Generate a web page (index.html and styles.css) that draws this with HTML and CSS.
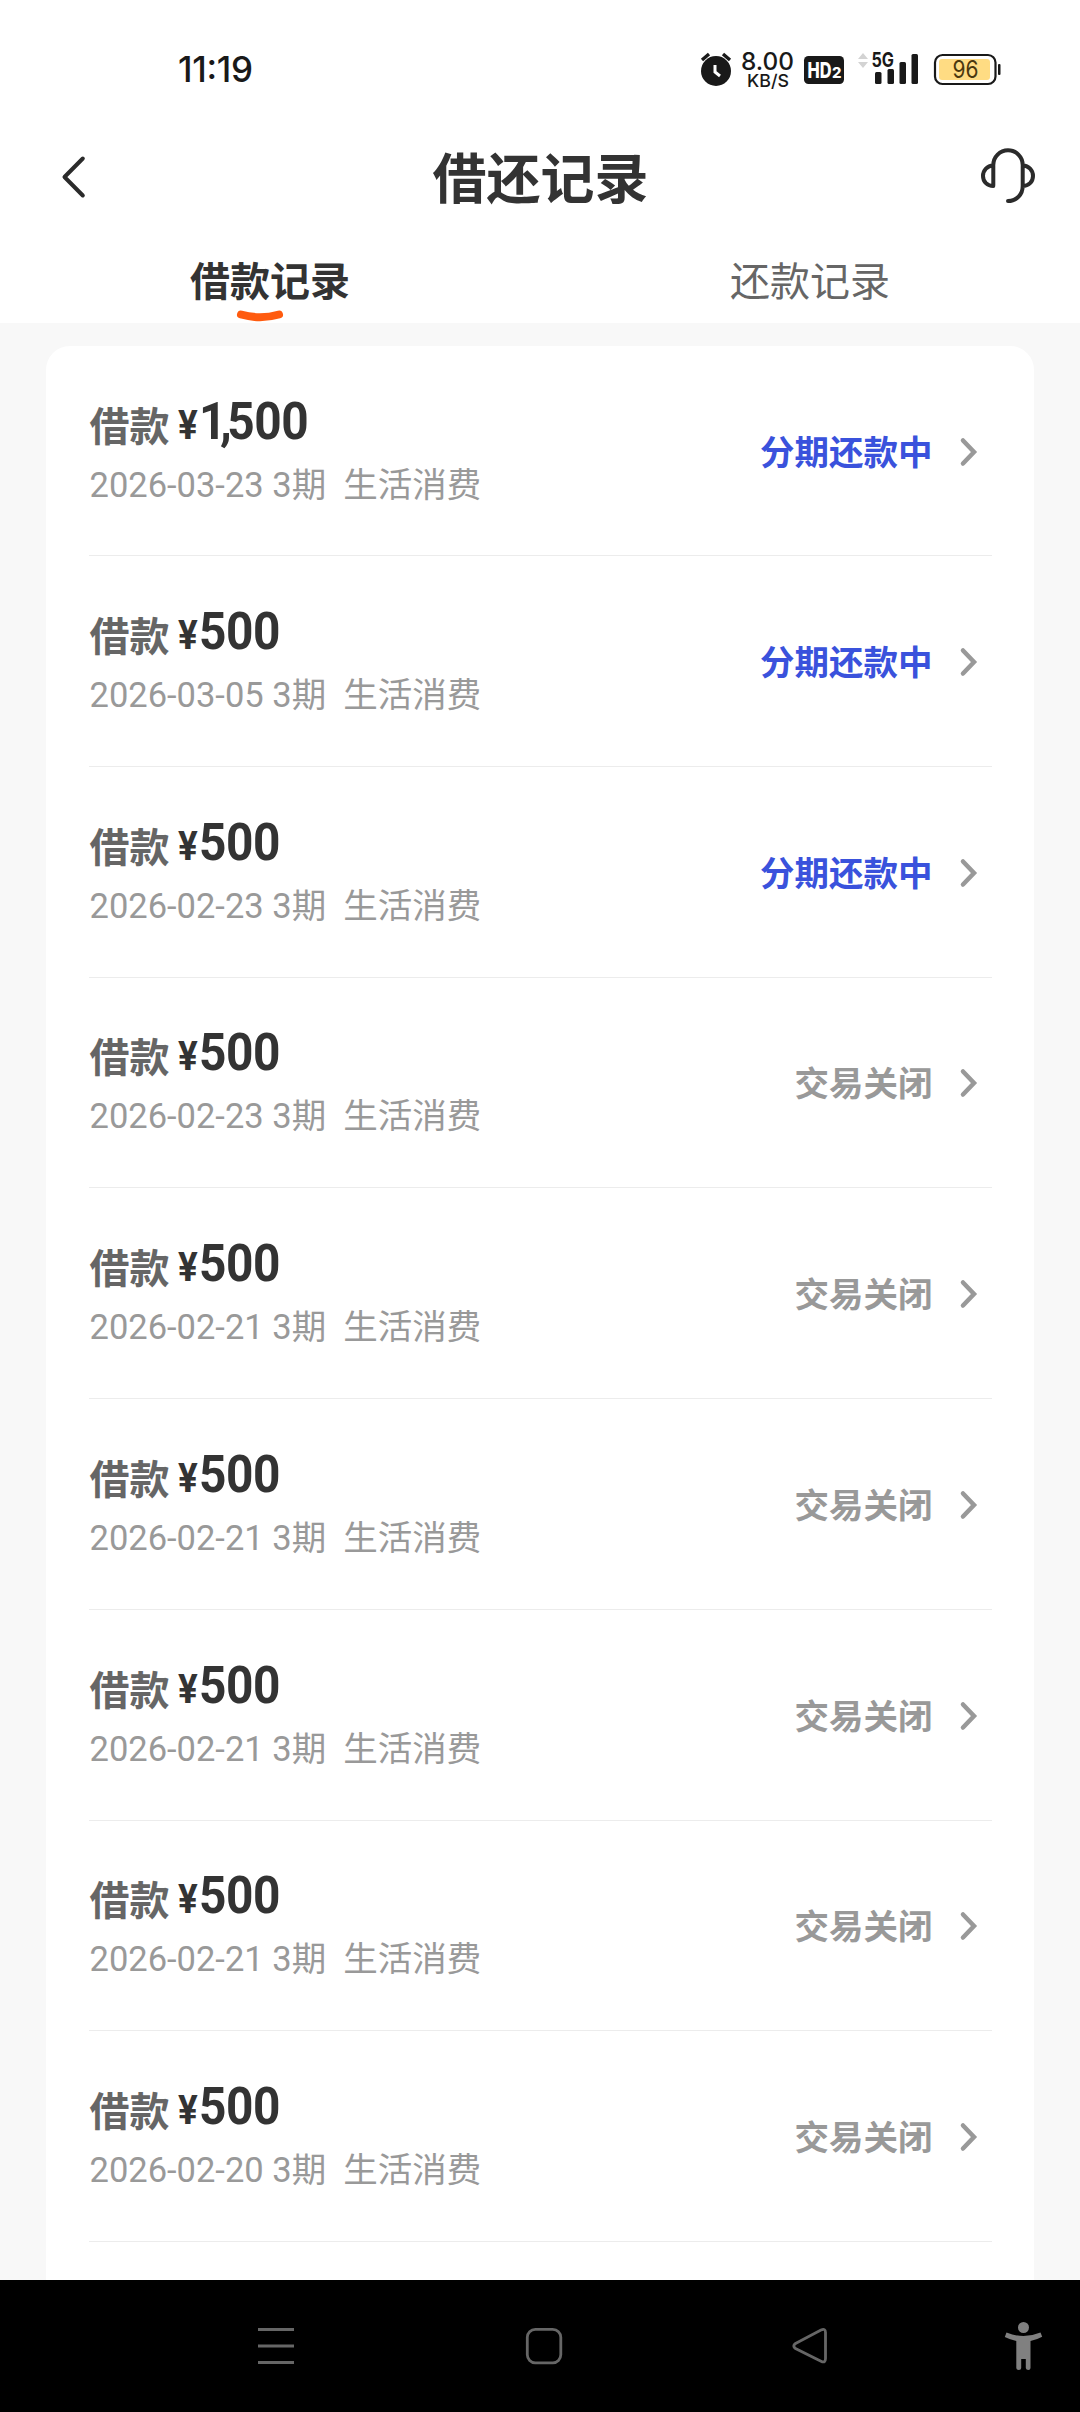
FILE: index.html
```html
<!DOCTYPE html>
<html lang="zh-CN">
<head>
<meta charset="utf-8">
<title>借还记录</title>
<link rel="stylesheet" href="styles.css">
</head>
<body>
<div class="screen">
  <header class="statusbar">
    <svg class="clock" viewBox="170 0 90 110"><text x="178" y="82" textLength="75" class="time">11:19</text></svg>
    <div class="indicators">
      <svg width="40" height="110" viewBox="697 0 40 110">
        <circle cx="716" cy="71" r="15" class="ink"/>
        <path d="M702 60l7-6M730 60l-7-6" stroke="#191919" stroke-width="3.4"/>
        <path d="M715 65v7l5 4" fill="none" stroke="#fff" stroke-width="3"/>
      </svg>
      <svg width="61" height="110" viewBox="737 0 61 110">
        <text x="741" y="70" textLength="53" lengthAdjust="spacingAndGlyphs" class="rate">8.00</text>
        <text x="747" y="87" textLength="42" lengthAdjust="spacingAndGlyphs" class="unit">KB/S</text>
      </svg>
      <svg width="56" height="110" viewBox="798 0 56 110">
        <rect x="804" y="56" width="40" height="28" rx="4.5" class="ink"/>
        <text x="807.500" y="78" textLength="24" lengthAdjust="spacingAndGlyphs" class="hd">HD</text>
        <text x="832" y="78" textLength="9.500" lengthAdjust="spacingAndGlyphs" class="hd-num">2</text>
      </svg>
      <svg width="70" height="110" viewBox="854 0 70 110">
        <path d="M858 59l5-6 5 6zM858 62l5 6 5-6z" fill="#d3d3d3"/>
        <text x="871.500" y="67" textLength="22.500" lengthAdjust="spacingAndGlyphs" class="net">5G</text>
        <g class="ink"><rect x="875" y="72" width="6.500" height="12" rx="1.500"/><rect x="887.500" y="69" width="6.500" height="15" rx="1.500"/><rect x="899.500" y="62" width="6.500" height="22" rx="1.500"/><rect x="911.500" y="54" width="6.500" height="30" rx="1.500"/></g>
      </svg>
      <svg width="80" height="110" viewBox="924 0 80 110">
        <rect x="935" y="55" width="60.500" height="29" rx="7.500" fill="#fff" stroke="#191919" stroke-width="2.200"/>
        <rect x="939" y="59" width="51" height="21" rx="3" fill="#ffdc83"/>
        <rect x="998" y="64" width="2.500" height="11" rx="1" class="ink"/>
        <text x="952.500" y="78" textLength="26" lengthAdjust="spacingAndGlyphs" class="charge">96</text>
      </svg>
    </div>
  </header>

  <nav class="titlebar">
    <svg class="nav-icon" viewBox="40 142 66 70"><path d="M82.800 158.500L64.500 177l18.300 18.500" class="line"/></svg>
    <h1 class="title">借还记录</h1>
    <svg class="nav-icon" viewBox="975 142 66 70"><path d="M993.300 185.500V165a14.700 14.700 0 0 1 29.400 0v21c0 8.500-6 15-14.700 15M993.300 165.200c-6 .6-10.300 5-10.300 10.800s4.300 10 10.300 10M1022.700 165.200c6 .6 10.300 5 10.300 10.800s-4.300 10-10.300 10" class="line"/></svg>
  </nav>

  <div class="tabs">
    <div class="tab tab-active">借款记录
      <svg class="smile" viewBox="0 0 48 14"><path d="M5 5.500q19 5.500 38 0" fill="none" stroke="#ff5b0f" stroke-width="8" stroke-linecap="round"/></svg>
    </div>
    <div class="tab">还款记录</div>
  </div>

  <main class="content">
    <ul class="card" id="records"></ul>
  </main>

  <footer class="navbar">
    <svg viewBox="0 2280 1080 132" width="1080" height="132">
      <path d="M258 2329.500h36M258 2346h36M258 2362.500h36" class="key"/>
      <rect x="527.300" y="2329.300" width="33.500" height="33.500" rx="8" class="key"/>
      <path d="M795.500 2343.500L821 2330Q825.500 2328 825.500 2332.500V2358.500Q825.500 2363.500 821 2361.200L795.500 2348.500Q792 2346 795.500 2343.500z" class="key"/>
      <g fill="#808080"><circle cx="1023.500" cy="2327.500" r="5.500"/><path d="M1006.500 2332.500q17 7 34 0l1.700 4.200q-5.500 3-11.700 4.300V2368q0 2-2.200 2t-2.500-2v-9h-4.600v9q0 2-2.400 2t-2.500-2V2341q-6-1.200-11.500-4z"/></g>
    </svg>
  </footer>
</div>
<script src="records.js"></script>
</body>
</html>
```
FILE: styles.css
```css
* { box-sizing: border-box; margin: 0; padding: 0; }
body {
  width: 1080px;
  background: #fff;
  font-family: Roboto, "Noto Sans CJK SC", sans-serif;
  color: #333;
}
svg { display: block; flex: none; }
.screen { display: flex; flex-direction: column; height: 2412px; overflow: hidden; }

.statusbar { display: flex; justify-content: space-between; height: 110px; padding: 0 76px 0 170px; flex: none; }
.clock { width: 90px; height: 110px; }
.indicators { display: flex; }
.ink { fill: #191919; }
.statusbar text { fill: #191919; font-family: Inter, sans-serif; }
.statusbar .time { font-size: 35px; font-weight: 500; }
.statusbar .rate { font-size: 24px; font-weight: 500; }
.statusbar .unit { font-size: 17.500px; font-weight: 500; }
.statusbar .hd { font-size: 22px; font-weight: 800; fill: #fff; }
.statusbar .hd-num { font-size: 15px; font-weight: 800; fill: #fff; }
.statusbar .net { font-size: 20px; font-weight: 700; }
.statusbar .charge { font-size: 24px; font-weight: 400; fill: #4b380f; }

.titlebar { display: flex; align-items: center; justify-content: space-between; height: 134px; padding: 0 39px 0 40px; flex: none; }
.nav-icon { width: 66px; height: 70px; }
.line { fill: none; stroke: #2b2b2b; stroke-width: 4; stroke-linecap: round; stroke-linejoin: round; }
.title { padding-bottom: 3px; font: 700 54px/80px "Noto Sans CJK SC", sans-serif; }

.tabs { display: flex; height: 79px; flex: none; }
.tab { position: relative; flex: 1; text-align: center; font: 400 40px/70px "Noto Sans CJK SC", sans-serif; color: #666; }
.tab-active { font-weight: 700; color: #333; }
.smile { position: absolute; left: 236px; bottom: 0; width: 48px; height: 14px; }

.content { flex: 1; min-height: 0; padding: 23px 46px 0; background: #f8f8f8; overflow: hidden; }
.card { height: 100%; padding: 0 42.500px; background: #fff; border-radius: 24px 24px 0 0; list-style: none; }
.row { display: flex; align-items: center; height: 210.750px; border-bottom: 1.500px solid #ececec; }
.row:first-child { height: 210px; }
.info { flex: 1; padding-left: 1px; }
.loan { display: flex; align-items: baseline; height: 60px; margin-top: -1px; margin-bottom: 1px; line-height: 60px; }
.label { width: 88px; font: 700 40px/60px "Noto Sans CJK SC", sans-serif; color: #666; }
.yen { width: 21px; font-size: 40px; font-weight: 700; transform: translateY(-2px) scaleX(.92); transform-origin: left; }
.amount { font-size: 52px; font-weight: 700; letter-spacing: -.5px; transform: translateY(-2px) scaleX(.92); transform-origin: left; }
.thousand { letter-spacing: -7px; }
.comma { letter-spacing: -5px; }
.meta { padding-top: 4px; margin-bottom: -4px; font-size: 34.500px; line-height: 52px; color: #999; white-space: pre; }
.state { padding-bottom: 2px; font: 700 34.500px/50px "Noto Sans CJK SC", sans-serif; color: #999; }
.state-open { color: #3a52dc; }
.chevron { width: 20px; height: 32px; margin: 2px 14px 0 25px; }
.chevron path { fill: none; stroke: #999; stroke-width: 4.500; stroke-linecap: round; stroke-linejoin: miter; }

.navbar { height: 132px; background: #000; flex: none; }
.key { fill: none; stroke: #666; stroke-width: 2.800; }
```
FILE: records.js
```js
const records = [
  ['1,500', '2026-03-23', true],
  ['500', '2026-03-05', true],
  ['500', '2026-02-23', true],
  ['500', '2026-02-23', false],
  ['500', '2026-02-21', false],
  ['500', '2026-02-21', false],
  ['500', '2026-02-21', false],
  ['500', '2026-02-21', false],
  ['500', '2026-02-20', false],
];

document.getElementById('records').innerHTML = records.map(([amount, date, open]) => `
  <li class="row">
    <div class="info">
      <div class="loan"><span class="label">借款</span><span class="yen">¥</span><span class="amount">${amount.replace('1,', '<span class="thousand">1</span><span class="comma">,</span>')}</span></div>
      <div class="meta">${date} 3期  生活消费</div>
    </div>
    <span class="state ${open ? 'state-open' : ''}">${open ? '分期还款中' : '交易关闭'}</span>
    <svg class="chevron" viewBox="0 0 20 32"><path d="M5 4.500L16 16 5 27.500"/></svg>
  </li>`).join('');
```
